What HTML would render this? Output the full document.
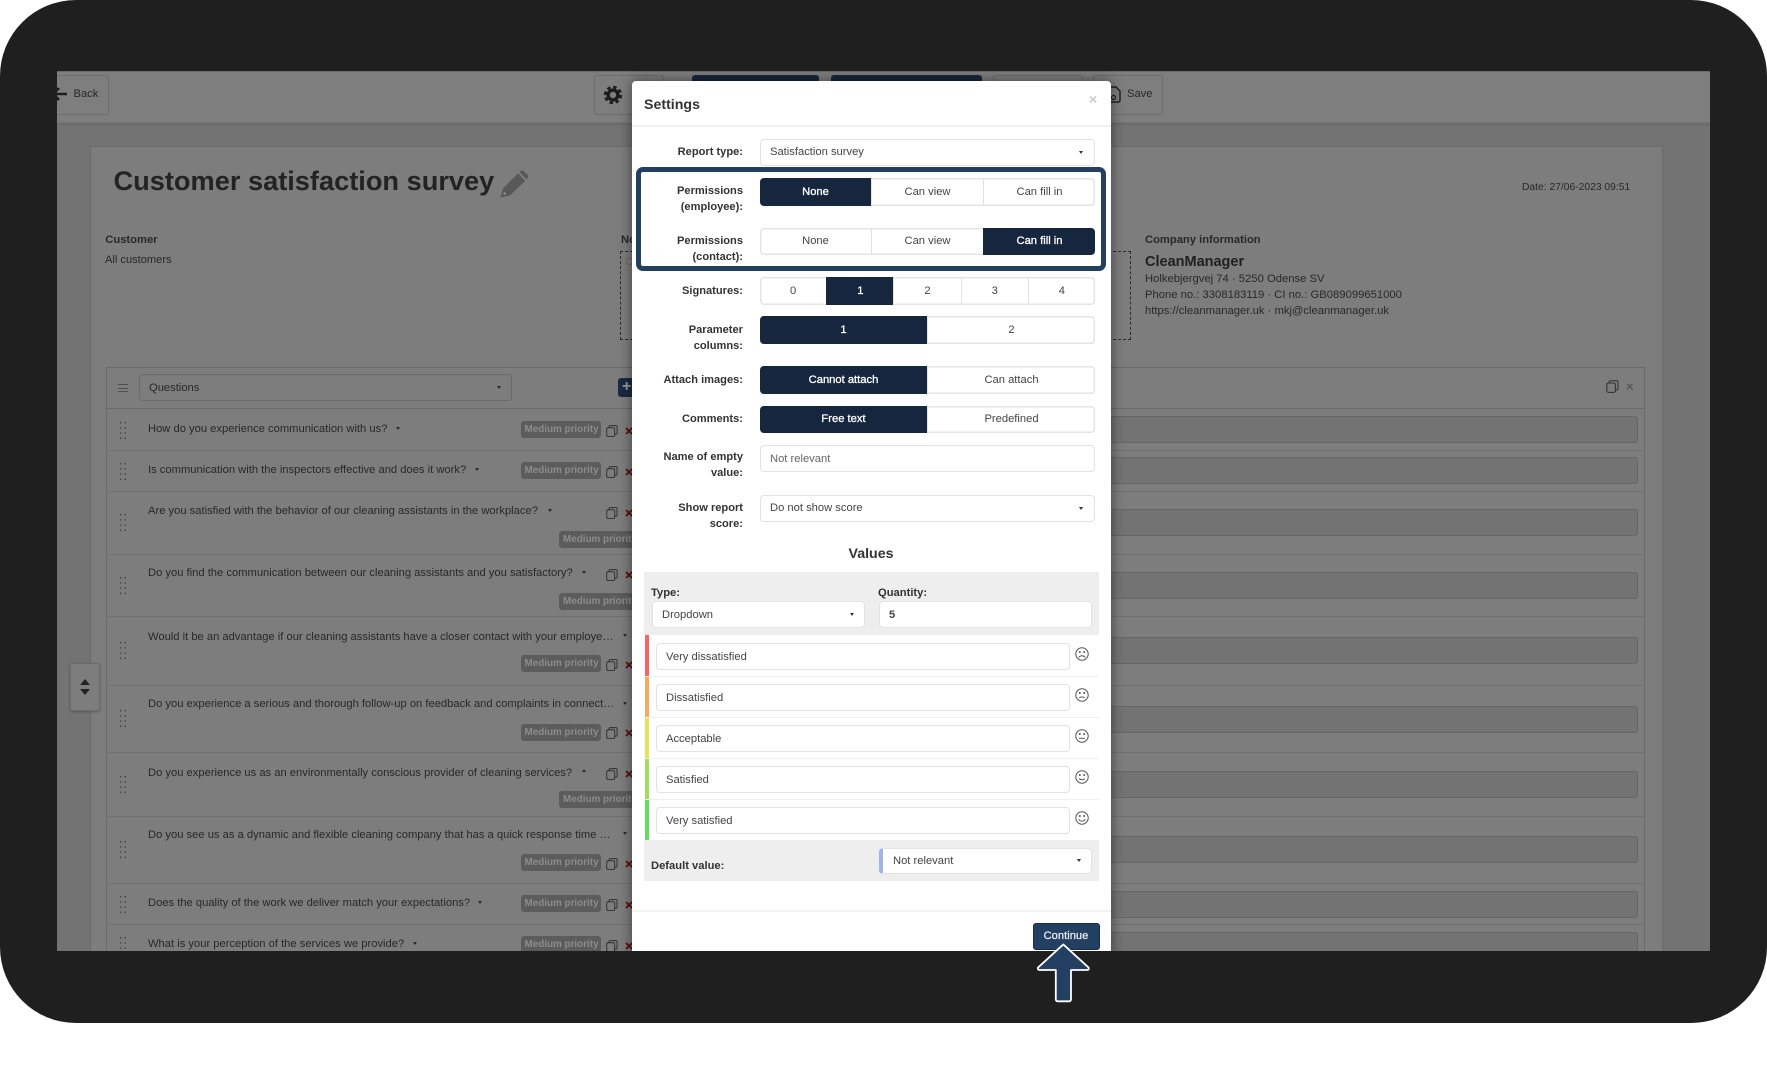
<!DOCTYPE html>
<html lang="en">
<head>
<meta charset="utf-8">
<title>Customer satisfaction survey</title>
<style>
html,body{margin:0;padding:0;width:1767px;height:1023px;background:#fff;overflow:hidden;font-family:"Liberation Sans",Arial,sans-serif}
*{box-sizing:border-box}
#frame{position:absolute;left:0;top:0;width:1767px;height:1023px;background:#201f20;border-radius:76px}
#screen{position:absolute;left:0;top:0;width:1767px;height:1023px;clip-path:inset(71px 57px 72px 57px)}
#bg{position:absolute;left:0;top:0;width:1767px;height:1023px;background:#737373;filter:blur(.35px)}
.a{position:absolute}
.t{position:absolute;white-space:nowrap;line-height:14px;font-size:11.2px;color:#282828}
#bg .t{margin-top:1px}
.b{font-weight:bold}
.btn{position:absolute;border:1px solid #6c6c6c;border-radius:3px;background:#7e7e7e}
.ln{position:absolute;left:106px;width:1539px;height:1px;background:#717171}
.inp{position:absolute;left:1000px;width:638px;background:#737373;border:1px solid #666;border-radius:3px;height:27px}
.bd{position:absolute;height:17px;width:80px;background:#5c5c5c;border-radius:3px;color:#8c8c8c;font-weight:bold;font-size:9.9px;line-height:17.5px;padding-left:4px;white-space:nowrap}
.car{position:absolute;width:0;height:0;border-left:2.5px solid transparent;border-right:2.5px solid transparent;border-top:3px solid #2a2a2a}
svg{position:absolute;overflow:visible}
#modal{position:absolute;left:632px;top:81px;width:479px;height:900px;background:#fff;border-radius:4px;box-shadow:0 0 13px rgba(0,0,0,.5)}
#mc{position:absolute;left:0;top:0;width:1767px;height:1023px}
.l{position:absolute;right:1024px;text-align:right;font-weight:bold;font-size:11.1px;line-height:16px;color:#333;white-space:nowrap}
.g{position:absolute;left:760px;width:335px;display:flex;box-shadow:inset 0 0 0 1.5px #e4e4e4;border-radius:4px;overflow:hidden;background:#fff}
.g div{flex:1;display:flex;align-items:center;justify-content:center;font-size:11.2px;color:#444;border-left:1.5px solid #e2e2e2;padding-bottom:1px}
.g div:first-child{border-left:0}
.g .on{background:#17263f;color:#fff;-webkit-text-stroke:.3px #fff;border-left-color:#17263f}
.g.p div{padding-bottom:0;padding-top:1px}
.f{position:absolute;background:#fff;border:1.5px solid #e2e2e2;border-radius:4px;font-size:11.2px;color:#444;display:flex;align-items:center;white-space:nowrap}
.f.p{padding-top:2px}
.mc{position:absolute;width:0;height:0;border-left:2.5px solid transparent;border-right:2.5px solid transparent;border-top:3px solid #333}
.st{position:absolute;left:645px;width:4px;height:41px}
.rw{position:absolute;left:644px;width:455px;height:1px;background:#f4eeee}
</style>
</head>
<body>
<svg width="0" height="0" style="position:absolute">
<defs>
<symbol id="copy" viewBox="0 0 13 13"><g fill="none" stroke="#2e2e2e" stroke-width="1"><rect x=".8" y="3" width="8.6" height="9.4" rx="1.6"/><path d="M3.2 3V2a1.3 1.3 0 0 1 1.3-1.3h6.2A1.3 1.3 0 0 1 12 2v6.6a1.3 1.3 0 0 1-1.3 1.3H9.4"/></g></symbol>
<symbol id="dots" viewBox="0 0 6 17"><g fill="#3c3c3c"><rect x="0" y="0" width="1.2" height="1.4"/><rect x="4.6" y="0" width="1.2" height="1.4"/><rect x="0" y="5.2" width="1.2" height="1.4"/><rect x="4.6" y="5.2" width="1.2" height="1.4"/><rect x="0" y="10.4" width="1.2" height="1.4"/><rect x="4.6" y="10.4" width="1.2" height="1.4"/><rect x="0" y="15.6" width="1.2" height="1.4"/><rect x="4.6" y="15.6" width="1.2" height="1.4"/></g></symbol>
<symbol id="rx" viewBox="0 0 8 8"><path d="M1 1L7 7M7 1L1 7" stroke="#5c0e0e" stroke-width="1.8" fill="none"/></symbol>
</defs>
</svg>
<div id="frame"></div>
<div id="screen">
<div id="bg">
  <!-- top bar -->
  <div class="a" style="left:57px;top:71px;width:1653px;height:52px;background:#7e7e7e;border-top:1px solid #6a6a6a;border-bottom:1px solid #757575;box-shadow:0 1px 3px rgba(0,0,0,.12)"></div>
  <div class="btn" style="left:40px;top:75px;width:69px;height:40px"></div>
  <svg style="left:50px;top:86px" width="18" height="16" viewBox="0 0 18 16"><path d="M17 8H3M9 2L3 8l6 6" fill="none" stroke="#1d1d1d" stroke-width="2.6"/></svg>
  <div class="t" style="left:73.5px;top:86px">Back</div>
  <div class="btn" style="left:594px;top:75px;width:70px;height:40px"></div>
  <svg style="left:603px;top:85px" width="20" height="20" viewBox="0 0 20 20"><circle cx="10" cy="10" r="4.9" fill="none" stroke="#1c1c1c" stroke-width="3.4"/><circle cx="10" cy="10" r="7.9" fill="none" stroke="#1c1c1c" stroke-width="2.6" stroke-dasharray="3.4 2.8"/></svg>
  <div class="a" style="left:692px;top:75px;width:127px;height:30px;background:#17263f;border-radius:3px"></div>
  <div class="a" style="left:831px;top:75px;width:151px;height:30px;background:#17263f;border-radius:3px"></div>
  <div class="btn" style="left:993px;top:75px;width:90px;height:40px"></div>
  <div class="btn" style="left:1093px;top:75px;width:70px;height:40px"></div>
  <svg style="left:1106px;top:86px" width="15" height="17" viewBox="0 0 15 17"><path d="M2.5 1H10l4 4v9.5a1.5 1.5 0 0 1-1.5 1.5h-10A1.5 1.5 0 0 1 1 14.5v-12A1.5 1.5 0 0 1 2.5 1z" fill="none" stroke="#1f1f1f" stroke-width="1.4"/><circle cx="7.5" cy="11.5" r="2" fill="none" stroke="#1f1f1f" stroke-width="1.2"/></svg>
  <div class="t" style="left:1127px;top:86px">Save</div>

  <!-- card -->
  <div class="a" style="left:90.5px;top:147px;width:1571px;height:900px;background:#7d7d7d;box-shadow:0 0 2px rgba(0,0,0,.2)"></div>
  <div class="t b" style="left:113.5px;top:163px;font-size:27.2px;line-height:34px;color:#232323">Customer satisfaction survey</div>
  <svg style="left:500px;top:170px" width="29" height="28" viewBox="0 0 29 28"><path d="M0.5 27.5L3 18.5 18 3.5l7.2 7.2L10 25.5z" fill="#585858"/><path d="M19.5 2.2l1-1a2.4 2.4 0 0 1 3.4 0l3.6 3.6a2.4 2.4 0 0 1 0 3.4l-1 1z" fill="#585858"/><circle cx="4.6" cy="23.4" r="1.3" fill="#8a8a8a"/></svg>
  <div class="t b" style="left:105.3px;top:232.3px">Customer</div>
  <div class="t" style="left:105px;top:252px;font-size:11.1px">All customers</div>
  <div class="t b" style="left:621px;top:232.3px">Notes</div>
  <div class="a" style="left:620px;top:251px;width:511px;height:89px;border:1px dashed #2b2b2b"></div>
  <div class="t" style="left:625px;top:254px;color:#676767">C</div>
  <div class="t" style="left:1522px;top:180px;font-size:10.3px">Date: 27/06-2023 09:51</div>
  <div class="t b" style="left:1145px;top:232.3px;font-size:11.2px">Company information</div>
  <div class="t b" style="left:1145px;top:253px;font-size:14.5px;line-height:17px;color:#1f1f1f">CleanManager</div>
  <div class="t" style="left:1145px;top:271px;font-size:11.25px">Holkebjergvej 74 · 5250 Odense SV</div>
  <div class="t" style="left:1145px;top:286.5px;font-size:11.25px">Phone no.: 3308183119 · CI no.: GB089099651000</div>
  <div class="t" style="left:1145px;top:302.5px;font-size:11.25px">https://cleanmanager.uk · mkj@cleanmanager.uk</div>

  <!-- question box -->
  <div class="a" style="left:106px;top:367px;width:1539px;height:700px;border:1px solid #6a6a6a"></div>
  <div class="a" style="left:117.5px;top:384px;width:10px;height:8px;border-top:1px solid #505050;border-bottom:1px solid #505050"></div>
  <div class="a" style="left:117.5px;top:387.5px;width:10px;height:1px;background:#505050"></div>
  <div class="a" style="left:139px;top:374px;width:373px;height:27px;border:1px solid #6a6a6a;border-radius:3px"></div>
  <div class="t" style="left:149px;top:380px">Questions</div>
  <div class="car" style="left:496.5px;top:386px"></div>
  <div class="a" style="left:617.5px;top:378px;width:24px;height:19px;background:#1a2a44;border-radius:3px"></div>
  <div class="t" style="left:622px;top:378px;color:#9a9a9a;font-size:16px;line-height:16px;font-weight:bold">+</div>
  <svg style="left:1606px;top:380px" width="13" height="13"><use href="#copy"/></svg>
  <div class="t b" style="left:1626px;top:379px;color:#585858;font-size:13px">×</div>

  <!-- row separators -->
  <div class="ln" style="top:408px;background:#6a6a6a"></div>
  <div class="ln" style="top:450px"></div>
  <div class="ln" style="top:491px"></div>
  <div class="ln" style="top:554px"></div>
  <div class="ln" style="top:616px"></div>
  <div class="ln" style="top:685px"></div>
  <div class="ln" style="top:752px"></div>
  <div class="ln" style="top:816px"></div>
  <div class="ln" style="top:883px"></div>
  <div class="ln" style="top:924px"></div>

  <!-- right inputs -->
  <div class="inp" style="top:416px"></div>
  <div class="inp" style="top:457px"></div>
  <div class="inp" style="top:509px"></div>
  <div class="inp" style="top:572px"></div>
  <div class="inp" style="top:637px"></div>
  <div class="inp" style="top:706px"></div>
  <div class="inp" style="top:771px"></div>
  <div class="inp" style="top:836px"></div>
  <div class="inp" style="top:891px"></div>
  <div class="inp" style="top:932px"></div>

  <!-- row 1 -->
  <svg style="left:120px;top:421.5px" width="6" height="17"><use href="#dots"/></svg>
  <div class="t" style="left:148px;top:421px">How do you experience communication with us?</div>
  <div class="car" style="left:395.8px;top:427px"></div>
  <div class="bd" style="left:520.5px;top:421px">Medium priority</div>
  <svg style="left:606px;top:425px" width="12" height="12"><use href="#copy"/></svg>
  <svg style="left:625px;top:427px" width="8" height="8"><use href="#rx"/></svg>
  <!-- row 2 -->
  <svg style="left:120px;top:462.5px" width="6" height="17"><use href="#dots"/></svg>
  <div class="t" style="left:148px;top:462px">Is communication with the inspectors effective and does it work?</div>
  <div class="car" style="left:474.8px;top:468px"></div>
  <div class="bd" style="left:520.5px;top:462px">Medium priority</div>
  <svg style="left:606px;top:466px" width="12" height="12"><use href="#copy"/></svg>
  <svg style="left:625px;top:468px" width="8" height="8"><use href="#rx"/></svg>
  <!-- row 3 -->
  <svg style="left:120px;top:514px" width="6" height="17"><use href="#dots"/></svg>
  <div class="t" style="left:148px;top:503px">Are you satisfied with the behavior of our cleaning assistants in the workplace?</div>
  <div class="car" style="left:547.5px;top:509px"></div>
  <div class="bd" style="left:559px;top:531px">Medium priority</div>
  <svg style="left:606px;top:507px" width="12" height="12"><use href="#copy"/></svg>
  <svg style="left:625px;top:509px" width="8" height="8"><use href="#rx"/></svg>
  <!-- row 4 -->
  <svg style="left:120px;top:576.5px" width="6" height="17"><use href="#dots"/></svg>
  <div class="t" style="left:148px;top:565.3px">Do you find the communication between our cleaning assistants and you satisfactory?</div>
  <div class="car" style="left:582px;top:571px"></div>
  <div class="bd" style="left:559px;top:593px">Medium priority</div>
  <svg style="left:606px;top:569px" width="12" height="12"><use href="#copy"/></svg>
  <svg style="left:625px;top:571px" width="8" height="8"><use href="#rx"/></svg>
  <!-- row 5 -->
  <svg style="left:120px;top:642px" width="6" height="17"><use href="#dots"/></svg>
  <div class="t" style="left:148px;top:628.7px">Would it be an advantage if our cleaning assistants have a closer contact with your employe…</div>
  <div class="car" style="left:623.2px;top:634px"></div>
  <div class="bd" style="left:520.5px;top:655px">Medium priority</div>
  <svg style="left:606px;top:659px" width="12" height="12"><use href="#copy"/></svg>
  <svg style="left:625px;top:661px" width="8" height="8"><use href="#rx"/></svg>
  <!-- row 6 -->
  <svg style="left:120px;top:710px" width="6" height="17"><use href="#dots"/></svg>
  <div class="t" style="left:148px;top:696.3px">Do you experience a serious and thorough follow-up on feedback and complaints in connect…</div>
  <div class="car" style="left:623.2px;top:702px"></div>
  <div class="bd" style="left:520.5px;top:724px">Medium priority</div>
  <svg style="left:606px;top:727px" width="12" height="12"><use href="#copy"/></svg>
  <svg style="left:625px;top:729px" width="8" height="8"><use href="#rx"/></svg>
  <!-- row 7 -->
  <svg style="left:120px;top:775.5px" width="6" height="17"><use href="#dots"/></svg>
  <div class="t" style="left:148px;top:764.7px">Do you experience us as an environmentally conscious provider of cleaning services?</div>
  <div class="car" style="left:582px;top:770px"></div>
  <div class="bd" style="left:559px;top:791px">Medium priority</div>
  <svg style="left:606px;top:768px" width="12" height="12"><use href="#copy"/></svg>
  <svg style="left:625px;top:770px" width="8" height="8"><use href="#rx"/></svg>
  <!-- row 8 -->
  <svg style="left:120px;top:840.5px" width="6" height="17"><use href="#dots"/></svg>
  <div class="t" style="left:148px;top:826.7px">Do you see us as a dynamic and flexible cleaning company that has a quick response time …</div>
  <div class="car" style="left:623.2px;top:832px"></div>
  <div class="bd" style="left:520.5px;top:854px">Medium priority</div>
  <svg style="left:606px;top:858px" width="12" height="12"><use href="#copy"/></svg>
  <svg style="left:625px;top:860px" width="8" height="8"><use href="#rx"/></svg>
  <!-- row 9 -->
  <svg style="left:120px;top:896px" width="6" height="17"><use href="#dots"/></svg>
  <div class="t" style="left:148px;top:895.3px">Does the quality of the work we deliver match your expectations?</div>
  <div class="car" style="left:478px;top:901px"></div>
  <div class="bd" style="left:520.5px;top:895px">Medium priority</div>
  <svg style="left:606px;top:899px" width="12" height="12"><use href="#copy"/></svg>
  <svg style="left:625px;top:901px" width="8" height="8"><use href="#rx"/></svg>
  <!-- row 10 -->
  <svg style="left:120px;top:937px" width="6" height="17"><use href="#dots"/></svg>
  <div class="t" style="left:148px;top:936.3px">What is your perception of the services we provide?</div>
  <div class="car" style="left:412.5px;top:942px"></div>
  <div class="bd" style="left:520.5px;top:936px">Medium priority</div>
  <svg style="left:606px;top:940px" width="12" height="12"><use href="#copy"/></svg>
  <svg style="left:625px;top:942px" width="8" height="8"><use href="#rx"/></svg>

  <!-- side handle -->
  <div class="a" style="left:70px;top:663px;width:30px;height:48px;background:#7d7d7d;border:1px solid #6b6b6b;border-radius:2px;box-shadow:0 1px 2px rgba(0,0,0,.25)"></div>
  <div class="a" style="left:79.5px;top:679px;width:0;height:0;border-left:5.5px solid transparent;border-right:5.5px solid transparent;border-bottom:6.5px solid #222"></div>
  <div class="a" style="left:79.5px;top:688.5px;width:0;height:0;border-left:5.5px solid transparent;border-right:5.5px solid transparent;border-top:6.5px solid #222"></div>
</div>

<!-- modal -->
<div id="modal"></div>
<div id="mc">
  <div class="t b" style="left:644px;top:98px;font-size:14.2px;color:#333">Settings</div>
  <div class="t b" style="left:1089px;top:92px;font-size:14px;color:#c9c9c9">×</div>
  <div class="a" style="left:632px;top:125px;width:479px;height:1.5px;background:#f0f0f0"></div>

  <div class="l" style="top:143.7px">Report type:</div>
  <div class="f" style="left:760px;top:139px;width:335px;height:26.5px;padding-left:9px">Satisfaction survey</div>
  <div class="mc" style="left:1079px;top:150.5px"></div>

  <div class="l" style="top:182.7px">Permissions<br>(employee):</div>
  <div class="g" style="top:178px;height:28px"><div class="on">None</div><div>Can view</div><div>Can fill in</div></div>
  <div class="l" style="top:233.3px">Permissions<br>(contact):</div>
  <div class="g" style="top:227.5px;height:27.5px"><div>None</div><div>Can view</div><div class="on">Can fill in</div></div>

  <div class="l" style="top:283.3px">Signatures:</div>
  <div class="g p" style="top:276.7px;height:28px"><div>0</div><div class="on">1</div><div>2</div><div>3</div><div>4</div></div>

  <div class="l" style="top:322.3px">Parameter<br>columns:</div>
  <div class="g" style="top:316px;height:28px"><div class="on">1</div><div>2</div></div>

  <div class="l" style="top:372.3px">Attach images:</div>
  <div class="g p" style="top:365.5px;height:28px"><div class="on">Cannot attach</div><div>Can attach</div></div>

  <div class="l" style="top:411.3px">Comments:</div>
  <div class="g" style="top:405.5px;height:27.5px"><div class="on">Free text</div><div>Predefined</div></div>

  <div class="l" style="top:450px;line-height:15.8px">Name of empty<br>value:</div>
  <div class="f" style="left:760px;top:445px;width:335px;height:27px;padding-left:9px;color:#666">Not relevant</div>

  <div class="l" style="top:499.7px">Show report<br>score:</div>
  <div class="f" style="left:760px;top:494.5px;width:335px;height:27px;padding-left:9px">Do not show score</div>
  <div class="mc" style="left:1079px;top:506.5px"></div>

  <div class="t b" style="left:771px;width:200px;text-align:center;top:547px;font-size:14.2px;color:#333">Values</div>

  <div class="a" style="left:644px;top:571.5px;width:455px;height:63.5px;background:#eee"></div>
  <div class="t b" style="left:651px;top:586px;color:#333">Type:</div>
  <div class="t b" style="left:878px;top:586px;color:#333">Quantity:</div>
  <div class="f p" style="left:651.5px;top:601px;width:213px;height:26.5px;padding-left:9.5px">Dropdown</div>
  <div class="mc" style="left:849.5px;top:612.5px"></div>
  <div class="f p" style="left:878.5px;top:601px;width:213px;height:26.5px;padding-left:9.5px;font-weight:bold">5</div>

  <div class="st" style="top:635px;background:#f96464"></div>
  <div class="st" style="top:676px;background:#f5aa5e"></div>
  <div class="st" style="top:717px;background:#e6e25c"></div>
  <div class="st" style="top:758px;background:#a0dd5e"></div>
  <div class="st" style="top:799px;background:#62dd60"></div>
  <div class="rw" style="top:675.5px"></div>
  <div class="rw" style="top:716.5px"></div>
  <div class="rw" style="top:757.5px"></div>
  <div class="rw" style="top:798.5px"></div>

  <div class="f p" style="left:656px;top:643px;width:414px;height:26.5px;padding-left:9px">Very dissatisfied</div>
  <div class="f p" style="left:656px;top:684px;width:414px;height:26.5px;padding-left:9px">Dissatisfied</div>
  <div class="f p" style="left:656px;top:725px;width:414px;height:26.5px;padding-left:9px">Acceptable</div>
  <div class="f p" style="left:656px;top:766px;width:414px;height:26.5px;padding-left:9px">Satisfied</div>
  <div class="f p" style="left:656px;top:807px;width:414px;height:26.5px;padding-left:9px">Very satisfied</div>

  <svg style="left:1075px;top:647px" width="14" height="14" viewBox="0 0 14 14"><g fill="none" stroke="#555" stroke-width="1"><circle cx="7" cy="7" r="6.2"/><path d="M3.8 10.4c1.6-2.2 4.8-2.2 6.4 0"/></g><circle cx="4.8" cy="5" r="1" fill="#555"/><circle cx="9.2" cy="5" r="1" fill="#555"/></svg>
  <svg style="left:1075px;top:688px" width="14" height="14" viewBox="0 0 14 14"><g fill="none" stroke="#555" stroke-width="1"><circle cx="7" cy="7" r="6.2"/><path d="M4.2 10c1.5-1.5 4.1-1.5 5.6 0"/></g><circle cx="4.8" cy="5" r="1" fill="#555"/><circle cx="9.2" cy="5" r="1" fill="#555"/></svg>
  <svg style="left:1075px;top:728.5px" width="14" height="14" viewBox="0 0 14 14"><g fill="none" stroke="#555" stroke-width="1"><circle cx="7" cy="7" r="6.2"/><path d="M4 9.3h6"/></g><circle cx="4.8" cy="5" r="1" fill="#555"/><circle cx="9.2" cy="5" r="1" fill="#555"/></svg>
  <svg style="left:1075px;top:769.5px" width="14" height="14" viewBox="0 0 14 14"><g fill="none" stroke="#555" stroke-width="1"><circle cx="7" cy="7" r="6.2"/><path d="M4.2 8.6c1.5 1.6 4.1 1.6 5.6 0"/></g><circle cx="4.8" cy="5" r="1" fill="#555"/><circle cx="9.2" cy="5" r="1" fill="#555"/></svg>
  <svg style="left:1075px;top:810.7px" width="14" height="14" viewBox="0 0 14 14"><g fill="none" stroke="#555" stroke-width="1"><circle cx="7" cy="7" r="6.2"/><path d="M3.6 8.2c1.6 2.6 5.2 2.6 6.8 0"/></g><circle cx="4.8" cy="5" r="1" fill="#555"/><circle cx="9.2" cy="5" r="1" fill="#555"/></svg>

  <div class="a" style="left:644px;top:840px;width:455px;height:41px;background:#eee"></div>
  <div class="t b" style="left:651px;top:859px;color:#333">Default value:</div>
  <div class="f" style="left:878.5px;top:848px;width:213px;height:25.5px;padding-left:10.5px;border-left:4px solid #9db8de">Not relevant</div>
  <div class="mc" style="left:1076.5px;top:859px"></div>

  <div class="a" style="left:632px;top:910px;width:479px;height:1.5px;background:#f2f2f2"></div>
  <div class="a" style="left:1032.5px;top:922.5px;width:67px;height:27.5px;background:#233f62;border:1px solid #182c47;border-radius:3px;color:#e9edf3;font-size:11.2px;line-height:25px;text-align:center;-webkit-text-stroke:.25px #e9edf3">Continue</div>

  <!-- highlight -->
  <div class="a" style="left:636px;top:167px;width:470px;height:104px;border:5px solid #24405f;border-radius:7px"></div>
</div>
</div>

<!-- arrow -->
<svg style="left:1036px;top:942px" width="56" height="62" viewBox="0 0 56 62"><path d="M27.3 2.4L52.2 25.2a1.6 1.6 0 0 1-1 2.8H35V57.5a1.8 1.8 0 0 1-1.8 1.8H21.6a1.8 1.8 0 0 1-1.8-1.8V28H3.4a1.6 1.6 0 0 1-1-2.8z" fill="#233f62" stroke="#fff" stroke-width="1.8" stroke-linejoin="round"/></svg>
</body>
</html>
